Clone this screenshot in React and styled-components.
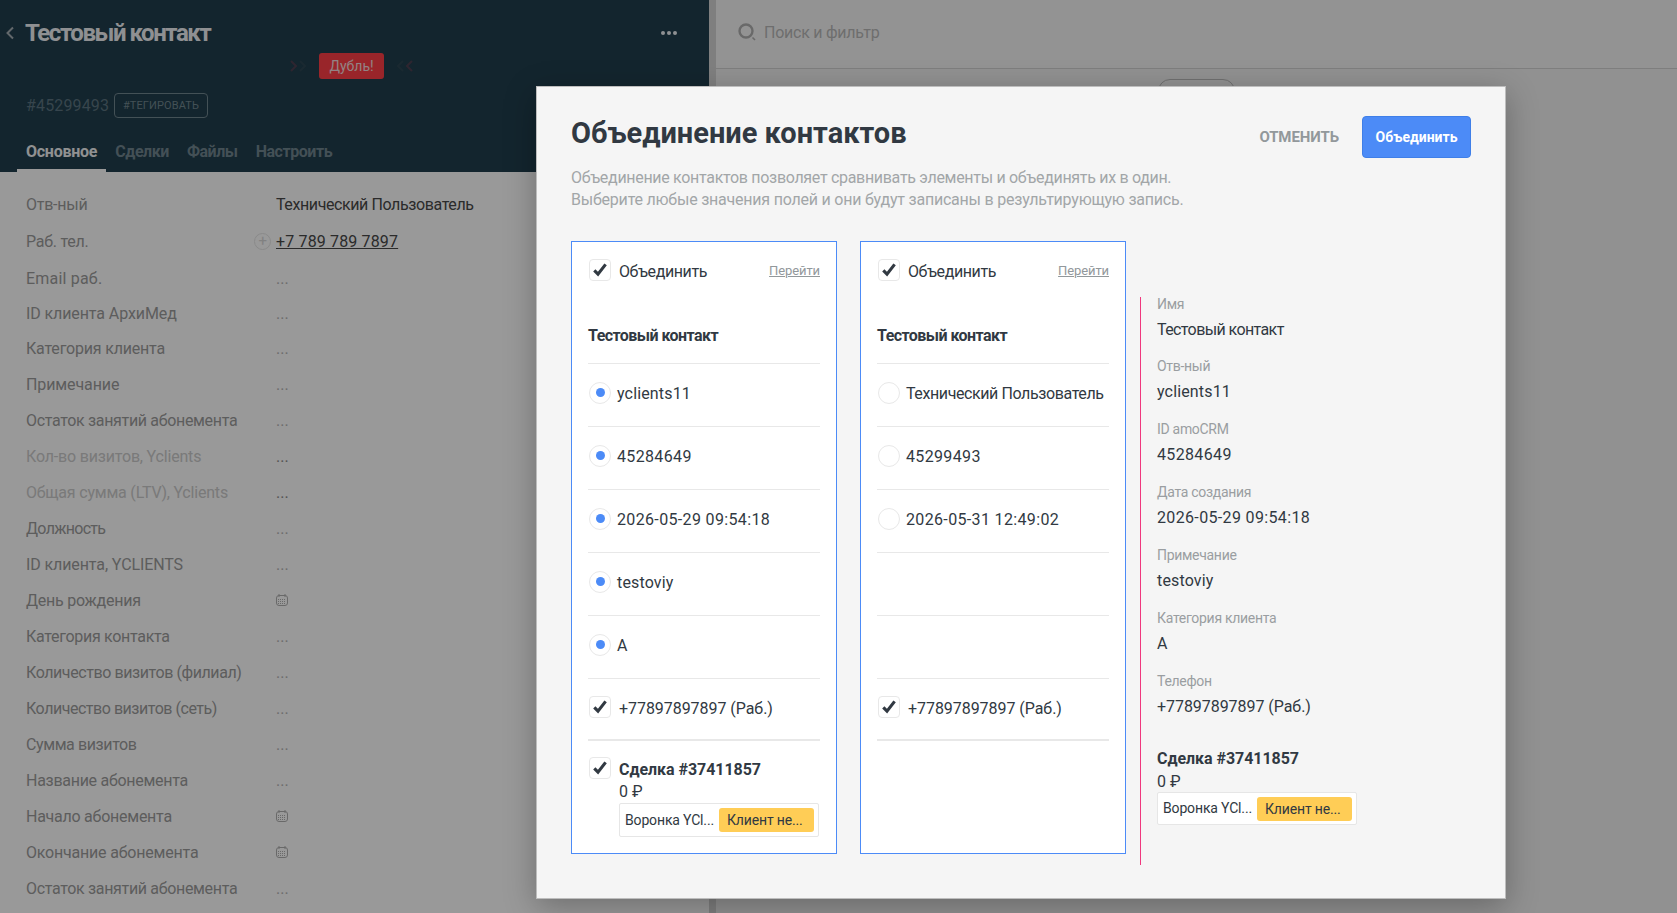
import styled, { createGlobalStyle } from 'styled-components';

const GlobalStyle = createGlobalStyle`
  html, body {
    margin: 0;
    padding: 0;
    background: #f2f2f2;
  }

  body {
    font-family: Roboto, "Noto Sans", sans-serif;
    font-size: 16px;
    letter-spacing: -0.4px;
    color: #313942;
  }

  * {
    box-sizing: border-box;
  }
`;

// tracking for digits and latin runs, they sit tighter than cyrillic in this font
const DIGITS = 0.35;
const LATIN = 0.15;
const PHONE = -0.05;

const Page = styled.div`
  position: relative;
  display: flex;
  width: 1677px;
  height: 913px;
  overflow: hidden;
`;

const LeftPanel = styled.aside`
  flex: 0 0 709px;
  background: #fff;
`;

const Splitter = styled.div`
  flex: 0 0 7px;
  background: #d4d4d4;
`;

const CardHeader = styled.header`
  display: flex;
  flex-direction: column;
  height: 172px;
  background: #203e4d;
`;

const TitleRow = styled.div`
  display: flex;
  align-items: center;
  gap: 10px;
  height: 53px;
  padding: 13px 32px 0 5px;
  color: #eef1f4;
`;

const ContactName = styled.h2`
  flex: 1;
  margin: 0;
  font-size: 24px;
  font-weight: 700;
  letter-spacing: -1.45px;
`;

const MenuDots = styled.div`
  display: flex;
  gap: 2px;

  & span {
    width: 4px;
    height: 4px;
    border-radius: 50%;
    background: #eef1f4;
  }
`;

const BadgeRow = styled.div`
  display: flex;
  justify-content: center;
  align-items: center;
  gap: 13px;
  height: 26px;
  padding-right: 6px;
`;

const DoubleBadge = styled.div`
  width: 65px;
  height: 26px;
  border-radius: 3px;
  background: #ff3f46;
  color: #f6d9dc;
  font-size: 14px;
  letter-spacing: 0;
  line-height: 26px;
  text-align: center;
`;

const IdRow = styled.div`
  display: flex;
  align-items: center;
  gap: 6px;
  height: 25px;
  margin-top: 14px;
  padding-left: 26px;
`;

const ContactId = styled.span`
  width: 82px;
  color: #5c7480;
  font-size: 16px;
  letter-spacing: 0.15px;
  white-space: nowrap;
`;

const TagButton = styled.span`
  width: 94px;
  height: 25px;
  border: 1px solid #71878f;
  border-radius: 4px;
  color: #71878f;
  font-size: 11px;
  letter-spacing: 0.1px;
  line-height: 23px;
  text-align: center;
`;

const Tabs = styled.nav`
  display: flex;
  align-items: flex-end;
  flex: 1;
  padding-left: 17px;
`;

const Tab = styled.span`
  padding: 0 9px 7px;
  border-bottom: 3px solid ${p => (p.$active ? '#fff' : 'transparent')};
  color: ${p => (p.$active ? '#f0f2f3' : '#71858f')};
  font-size: 16px;
  font-weight: 700;
  line-height: 20px;
  letter-spacing: ${p => (p.$active ? -0.25 : -0.45)}px;
`;

const FieldList = styled.div`
  padding-top: 14px;
`;

const FieldRow = styled.div`
  display: flex;
  align-items: center;
  height: ${p => p.$height || 36}px;
  padding-left: 26px;
`;

const FieldLabel = styled.div`
  flex: 0 0 228px;
  color: ${p => (p.$faded ? '#cbcbcb' : '#9b9b9b')};
  letter-spacing: ${p => p.$track ?? -0.25}px;
  white-space: nowrap;
`;

const IconSlot = styled.div`
  display: flex;
  align-items: center;
  justify-content: flex-start;
  flex: 0 0 22px;
`;

const FieldValue = styled.div`
  color: ${p => (p.$empty ? (p.$strong ? '#8c8c8c' : '#b5b5b5') : '#484848')};
  letter-spacing: ${p => (p.$empty ? 0 : p.$link ? 0.15 : -0.4)}px;
  text-decoration: ${p => (p.$link ? 'underline' : 'none')};
  white-space: nowrap;
`;

const AddIcon = styled.div`
  width: 17px;
  height: 17px;
  border: 1px solid #e6e6e6;
  border-radius: 50%;
  color: #d8d8d8;
  font-size: 15px;
  line-height: 14px;
  text-align: center;
`;

const RightPanel = styled.main`
  flex: 1;
  display: flex;
  flex-direction: column;
  background: #f2f2f2;
`;

const SearchBar = styled.div`
  display: flex;
  align-items: center;
  gap: 7px;
  height: 69px;
  padding: 0 0 4px 22px;
  border-bottom: 1px solid #d2d2d2;
  background: #f6f6f6;
  color: #b8b8b8;
  font-size: 16px;
  letter-spacing: -0.25px;
`;

const FeedHead = styled.div`
  display: flex;
  justify-content: center;
  padding-top: 10px;
`;

const DatePill = styled.div`
  width: 77px;
  height: 24px;
  border: 1px solid #bbb;
  border-radius: 12px;
`;

const Overlay = styled.div`
  position: absolute;
  inset: 0;
  background: rgba(0, 0, 0, 0.4);
`;

const Modal = styled.section`
  width: 970px;
  height: 813px;
  margin: 86px 0 0 536px;
  padding: 29px 34px 0;
  border: 1px solid #bdbdbd;
  background: #f5f5f5;
  box-shadow: 0 8px 30px rgba(0, 0, 0, 0.28);
`;

const ModalHead = styled.div`
  display: flex;
  justify-content: space-between;
  align-items: flex-start;
  height: 51px;
`;

const ModalTitle = styled.h1`
  margin: -1px 0 0;
  font-size: 29px;
  font-weight: 700;
  line-height: 36px;
  letter-spacing: 0;
  color: #313942;
`;

const ModalActions = styled.div`
  display: flex;
  align-items: center;
  gap: 23px;
`;

const CancelButton = styled.span`
  color: #92989b;
  font-size: 15px;
  font-weight: 700;
  letter-spacing: -0.1px;
`;

const MergeButton = styled.span`
  width: 109px;
  height: 42px;
  border: 1px solid #3f7fe8;
  border-radius: 4px;
  background: #4c8bf7;
  color: #fff;
  font-size: 14px;
  font-weight: 700;
  letter-spacing: 0;
  line-height: 40px;
  text-align: center;
`;

const Description = styled.div`
  margin-bottom: 30px;
  color: #a2a6a8;
`;

const DescriptionLine = styled.p`
  margin: 0;
  font-size: 16px;
  line-height: 22px;
  letter-spacing: ${p => p.$track}px;
`;

const Columns = styled.div`
  display: flex;
  align-items: flex-start;
  gap: 23px;
`;

const MergeCard = styled.div`
  flex: 0 0 266px;
  min-width: 0;
  height: 613px;
  padding: 17px 16px 0;
  border: 1px solid #4c8bf7;
  background: #fff;
`;

const CardTop = styled.div`
  display: flex;
  align-items: center;
  height: 22px;
  padding-left: 1px;
`;

const CardTopLabel = styled.span`
  padding-top: 2px;
`;

const GoLink = styled.span`
  margin-left: auto;
  color: #92989b;
  font-size: 13px;
  letter-spacing: -0.1px;
  text-decoration: underline;
`;

const CheckBox = styled.span`
  display: flex;
  align-items: center;
  justify-content: center;
  flex: 0 0 22px;
  height: 22px;
  margin-right: 8px;
  border: 1px solid #e8e8e8;
  border-radius: 4px;
  background: #fff;
`;

const Radio = styled.span`
  display: flex;
  align-items: center;
  justify-content: center;
  flex: 0 0 22px;
  height: 22px;
  margin-right: 6px;
  padding-bottom: 2px;
  border: 1px solid #e8e8e8;
  border-radius: 50%;
  background: #fff;

  &::after {
    content: '';
    display: ${p => (p.$on ? 'block' : 'none')};
    width: 9px;
    height: 9px;
    border-radius: 50%;
    background: #4c8bf7;
  }
`;

const NameRow = styled.div`
  height: 83px;
  padding-top: 44px;
  border-bottom: 1px solid #e8e8e8;
  font-size: 16px;
  font-weight: 700;
  line-height: 22px;
  letter-spacing: -0.55px;
`;

const MergeRow = styled.div`
  display: flex;
  align-items: center;
  height: 63px;
  padding: 0 0 4px 1px;
  border-bottom: 1px solid #e8e8e8;
  white-space: nowrap;
`;

const PhoneRow = styled(MergeRow)`
  height: 62px;
  border-bottom-width: 2px;
`;

const Tracked = styled.span`
  letter-spacing: ${p => p.$track ?? -0.4}px;
`;

const PhoneText = styled(Tracked)`
  padding-top: 2px;
`;

const DealRow = styled.div`
  display: flex;
  align-items: flex-start;
  padding: 16px 0 0 1px;
`;

const DealBody = styled.div`
  flex: 1;
  min-width: 0;
  padding-top: 2px;
  line-height: 22px;
`;

const DealTitle = styled.div`
  font-weight: 700;
  letter-spacing: -0.05px;
`;

const DealSum = styled.div`
  letter-spacing: 0;
`;

const PipelineChip = styled.div`
  display: flex;
  align-items: center;
  gap: 5px;
  width: 200px;
  height: ${p => (p.$tight ? 33 : 34)}px;
  margin-top: ${p => (p.$tight ? '-1px' : '0')};
  padding: 0 5px;
  border: 1px solid #e6e6e6;
  border-radius: 2px;
  background: #fff;
  font-size: 14px;
  letter-spacing: -0.15px;
  white-space: nowrap;
`;

const PipelineName = styled.span`
  flex: 1;
`;

const StatusTag = styled.span`
  flex: 0 0 95px;
  height: 24px;
  padding-left: 8px;
  border-radius: 3px;
  background: #ffcd56;
  line-height: 24px;
`;

const ResultColumn = styled.div`
  flex: 0 0 auto;
  width: 300px;
  height: 568px;
  margin: 56px 0 0 -9px;
  padding-left: 16px;
  border-left: 1px solid #f0387e;
`;

const ResultField = styled.div`
  height: 63px;

  &:first-child {
    height: 62px;
  }
`;

const ResultLabel = styled.div`
  margin-bottom: 7px;
  color: #9a9ea1;
  font-size: 14px;
  line-height: 14px;
  letter-spacing: -0.3px;
`;

const ResultValue = styled.div`
  padding-top: 1px;
  line-height: 22px;
  letter-spacing: ${p => p.$track ?? -0.6}px;
`;

const ResultDeal = styled.div`
  margin-top: 10px;
  line-height: 23px;
`;

const fields = [
  { label: 'Отв-ный', value: 'Технический Пользователь', height: 37 },
  { label: 'Раб. тел.', value: '+7 789 789 7897', link: true, add: true },
  { label: 'Email раб.', track: 0.2, height: 38 },
  { label: 'ID клиента АрхиМед', track: -0.1, height: 33 },
  { label: 'Категория клиента', track: -0.19 },
  { label: 'Примечание', track: -0.1 },
  { label: 'Остаток занятий абонемента', track: -0.33 },
  { label: 'Кол-во визитов, Yclients', faded: true, strong: true, track: -0.18 },
  { label: 'Общая сумма (LTV), Yclients', faded: true, strong: true, track: -0.2 },
  { label: 'Должность', track: -0.7 },
  { label: 'ID клиента, YCLIENTS', track: -0.1 },
  { label: 'День рождения', date: true },
  { label: 'Категория контакта', track: -0.3 },
  { label: 'Количество визитов (филиал)', track: -0.42 },
  { label: 'Количество визитов (сеть)', track: -0.47 },
  { label: 'Сумма визитов', track: -0.4 },
  { label: 'Название абонемента', track: -0.28 },
  { label: 'Начало абонемента', date: true },
  { label: 'Окончание абонемента', date: true, track: -0.2 },
  { label: 'Остаток занятий абонемента', track: -0.33 },
];

const results = [
  { label: 'Имя', value: 'Тестовый контакт' },
  { label: 'Отв-ный', value: 'yclients11', track: LATIN },
  { label: 'ID amoCRM', value: '45284649', track: DIGITS },
  { label: 'Дата создания', value: '2026-05-29 09:54:18', track: DIGITS },
  { label: 'Примечание', value: 'testoviy', track: LATIN },
  { label: 'Категория клиента', value: 'A', track: 0 },
  { label: 'Телефон', value: '+77897897897 (Раб.)', track: PHONE },
];

const leftRows = [
  { text: 'yclients11', track: LATIN },
  { text: '45284649', track: DIGITS },
  { text: '2026-05-29 09:54:18', track: DIGITS },
  { text: 'testoviy', track: LATIN },
  { text: 'A', track: 0 },
];

const rightRows = [
  { text: 'Технический Пользователь' },
  { text: '45299493', track: DIGITS },
  { text: '2026-05-31 12:49:02', track: DIGITS },
  {},
  {},
];

const BackIcon = () => (
  <svg width="10" height="14" viewBox="0 0 10 14" fill="none">
    <path d="M8 1.5 2.5 7 8 12.5" stroke="#a4adb3" strokeWidth="2" />
  </svg>
);

const CheckIcon = () => (
  <svg width="14" height="14" viewBox="0 0 14 14" fill="none">
    <path d="M1.3 7.4 5 11.2 12.6 1.4" stroke="#313942" strokeWidth="3.1" />
  </svg>
);

const CalendarIcon = () => (
  <svg width="12" height="12" viewBox="0 0 12 12" fill="none" stroke="#b0b0b0">
    <rect x="0.5" y="1.5" width="11" height="10" rx="2.5" />
    <path d="M3 0v3M9 0v3" />
    <path d="M2 5.5h8M2 7.5h8M2 9.5h8" strokeDasharray="1 1" />
  </svg>
);

const SearchIcon = () => (
  <svg width="19" height="19" viewBox="0 0 19 19" fill="none">
    <circle cx="8" cy="8" r="6.5" stroke="#b0b0b0" strokeWidth="2.4" />
    <path d="m14.5 14.5 2.5 2.5" stroke="#b0b0b0" strokeWidth="1.6" />
  </svg>
);

const DoubleChevron = ({ flip }) => (
  <svg width="17" height="12" viewBox="0 0 17 12" fill="none" strokeWidth="2">
    {flip ? (
      <>
        <path d="M15 1 10 6l5 5" stroke="#4d3f50" />
        <path d="M6 1 1 6l5 5" stroke="#2c4552" />
      </>
    ) : (
      <>
        <path d="M2 1l5 5-5 5" stroke="#4d3f50" />
        <path d="M11 1l5 5-5 5" stroke="#2c4552" />
      </>
    )}
  </svg>
);

const MergeColumn = ({ rows, picked }) => (
  <MergeCard>
    <CardTop>
      <CheckBox><CheckIcon /></CheckBox>
      <CardTopLabel>Объединить</CardTopLabel>
      <GoLink>Перейти</GoLink>
    </CardTop>
    <NameRow>Тестовый контакт</NameRow>
    {rows.map((row, i) => (
      <MergeRow key={i}>
        {row.text && <Radio $on={picked} />}
        {row.text && <Tracked $track={row.track}>{row.text}</Tracked>}
      </MergeRow>
    ))}
    <PhoneRow>
      <CheckBox><CheckIcon /></CheckBox>
      <PhoneText $track={PHONE}>+77897897897 (Раб.)</PhoneText>
    </PhoneRow>
    {picked && (
      <DealRow>
        <CheckBox><CheckIcon /></CheckBox>
        <DealBody>
          <DealTitle>Сделка #37411857</DealTitle>
          <DealSum>0 ₽</DealSum>
          <PipelineChip>
            <PipelineName>Воронка YCl...</PipelineName>
            <StatusTag>Клиент не...</StatusTag>
          </PipelineChip>
        </DealBody>
      </DealRow>
    )}
  </MergeCard>
);

export default function App() {
  return (
    <>
      <GlobalStyle />
      <Page>
        <LeftPanel>
          <CardHeader>
            <TitleRow>
              <BackIcon />
              <ContactName>Тестовый контакт</ContactName>
              <MenuDots><span /><span /><span /></MenuDots>
            </TitleRow>
            <BadgeRow>
              <DoubleChevron />
              <DoubleBadge>Дубль!</DoubleBadge>
              <DoubleChevron flip />
            </BadgeRow>
            <IdRow>
              <ContactId>#45299493</ContactId>
              <TagButton>#ТЕГИРОВАТЬ</TagButton>
            </IdRow>
            <Tabs>
              <Tab $active>Основное</Tab>
              <Tab>Сделки</Tab>
              <Tab>Файлы</Tab>
              <Tab>Настроить</Tab>
            </Tabs>
          </CardHeader>
          <FieldList>
            {fields.map((f, i) => (
              <FieldRow key={i} $height={f.height}>
                <FieldLabel $faded={f.faded} $track={f.track}>{f.label}</FieldLabel>
                <IconSlot>{f.add && <AddIcon>+</AddIcon>}</IconSlot>
                {f.date ? (
                  <CalendarIcon />
                ) : (
                  <FieldValue $empty={!f.value} $strong={f.strong} $link={f.link}>
                    {f.value || '...'}
                  </FieldValue>
                )}
              </FieldRow>
            ))}
          </FieldList>
        </LeftPanel>
        <Splitter />
        <RightPanel>
          <SearchBar>
            <SearchIcon />
            Поиск и фильтр
          </SearchBar>
          <FeedHead><DatePill /></FeedHead>
        </RightPanel>
        <Overlay>
          <Modal>
            <ModalHead>
              <ModalTitle>Объединение контактов</ModalTitle>
              <ModalActions>
                <CancelButton>ОТМЕНИТЬ</CancelButton>
                <MergeButton>Объединить</MergeButton>
              </ModalActions>
            </ModalHead>
            <Description>
              <DescriptionLine $track={-0.31}>
                Объединение контактов позволяет сравнивать элементы и объединять их в один.
              </DescriptionLine>
              <DescriptionLine $track={-0.22}>
                Выберите любые значения полей и они будут записаны в результирующую запись.
              </DescriptionLine>
            </Description>
            <Columns>
              <MergeColumn picked rows={leftRows} />
              <MergeColumn rows={rightRows} />
              <ResultColumn>
                {results.map(r => (
                  <ResultField key={r.label}>
                    <ResultLabel>{r.label}</ResultLabel>
                    <ResultValue $track={r.track}>{r.value}</ResultValue>
                  </ResultField>
                ))}
                <ResultDeal>
                  <DealTitle>Сделка #37411857</DealTitle>
                  <DealSum>0 ₽</DealSum>
                  <PipelineChip $tight>
                    <PipelineName>Воронка YCl...</PipelineName>
                    <StatusTag>Клиент не...</StatusTag>
                  </PipelineChip>
                </ResultDeal>
              </ResultColumn>
            </Columns>
          </Modal>
        </Overlay>
      </Page>
    </>
  );
}
